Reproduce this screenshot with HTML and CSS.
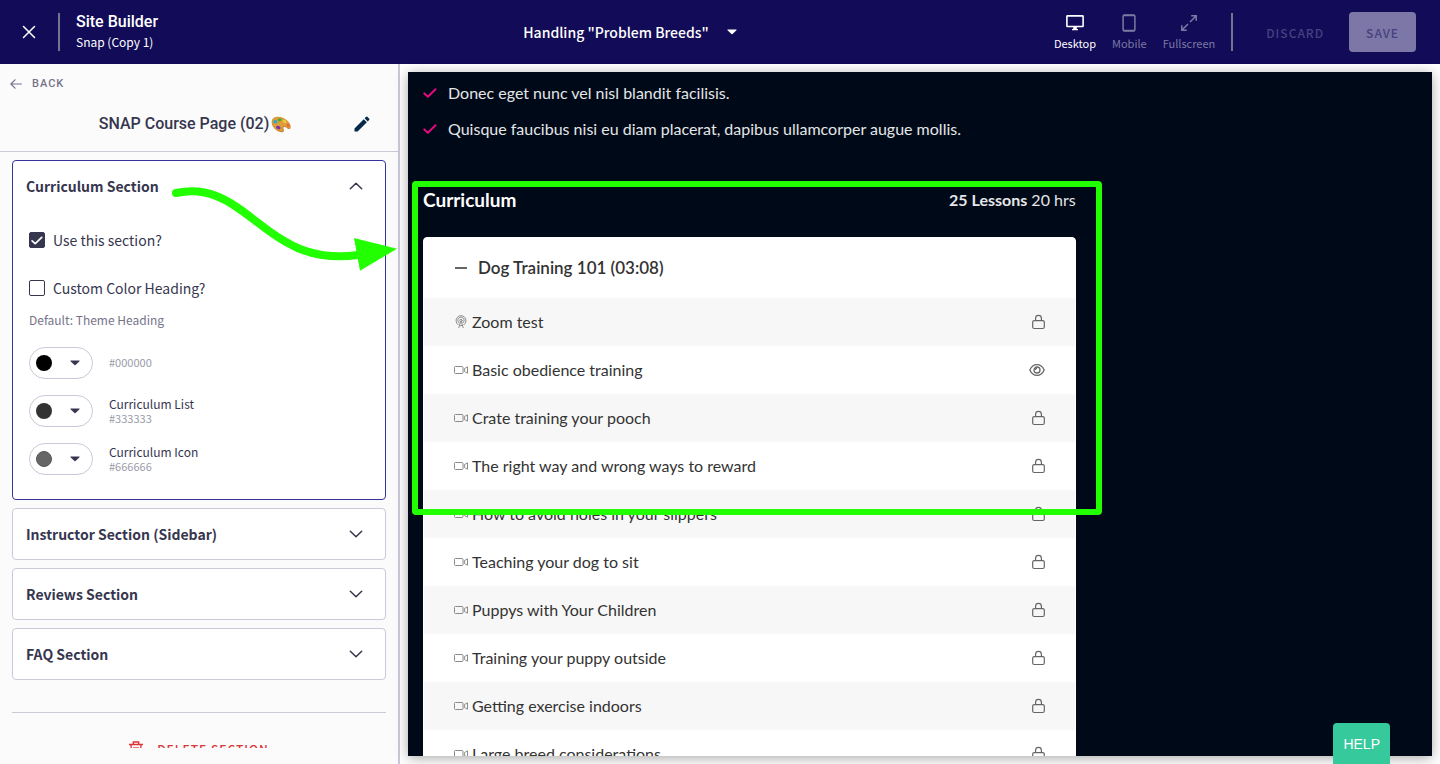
FILE: index.html
```html
<!DOCTYPE html>
<html lang="en">
<head>
<meta charset="utf-8">
<title>Site Builder</title>
<meta name="viewport" content="width=device-width, initial-scale=1">
<link rel="stylesheet" href="styles.css">
</head>
<body>
<svg class="sprite" aria-hidden="true">
  <symbol id="caret" viewBox="0 0 10 6"><path d="M.8.500h8.400a.4.4 0 0 1 .3.700L5.500 5a.7.7 0 0 1-1 0L.5 1.200A.4.4 0 0 1 .8.500z" fill="currentColor"/></symbol>
  <symbol id="chevron" viewBox="0 0 14 8"><path d="M1.300 1.200 7 6.800l5.700-5.600" fill="none" stroke="currentColor" stroke-width="1.500" stroke-linecap="round" stroke-linejoin="round"/></symbol>
  <symbol id="tick" viewBox="0 0 14 10"><path d="M1.300 5.400 4.900 8.700 12.500 1.300" fill="none" stroke="currentColor" stroke-width="2" stroke-linecap="round" stroke-linejoin="round"/></symbol>
  <symbol id="video" viewBox="0 0 14 10"><g fill="none" stroke="currentColor" stroke-width="1"><rect x=".5" y="1.500" width="8.500" height="7" rx="1"/><path d="M10.400 3.600 13.500 1.800v6.400l-3.100-1.800z" stroke-linejoin="round"/></g></symbol>
  <symbol id="podcast" viewBox="0 0 12 14"><g fill="none" stroke="currentColor" stroke-width="1" stroke-linecap="round"><path d="M3 9.700a5 5 0 1 1 6 0"/><path d="M4 7.900a3.200 3.200 0 1 1 4 0"/><circle cx="6" cy="5.500" r="1.200"/><path d="M5.500 7 3.800 12.700M6.500 7l1.700 5.700M4.500 10.600h3"/></g></symbol>
  <symbol id="lock" viewBox="0 0 14 16"><g fill="none" stroke="currentColor" stroke-width="1.200"><rect x="1.700" y="6.600" width="11.600" height="7.900" rx="1.500"/><path d="M4.600 6.500V4.300a2.900 2.900 0 0 1 5.800 0v2.200"/></g></symbol>
  <symbol id="eye" viewBox="0 0 16 14"><g fill="none" stroke="currentColor" stroke-width="1.300"><path d="M.8 7C2.400 3.500 5 1.600 8 1.600S13.600 3.500 15.200 7C13.600 10.500 11 12.400 8 12.400S2.400 10.500.8 7z"/><circle cx="8" cy="7" r="3"/><path d="M6.300 7A1.600 1.600 0 0 1 8 5.400"/></g></symbol>
</svg>

<header class="topbar">
  <div class="brand">
    <button class="icon-button close" type="button" aria-label="Close">
      <svg width="14" height="14" viewBox="0 0 14 14"><path d="M1.500 1.500l11 11M12.500 1.500l-11 11" stroke="currentColor" stroke-width="1.500" stroke-linecap="round"/></svg>
    </button>
    <span class="rule"></span>
    <div>
      <h1 class="brand-title">Site Builder</h1>
      <p class="brand-subtitle">Snap (Copy 1)</p>
    </div>
  </div>
  <div class="page-picker">
    <button class="page-button" type="button">Handling "Problem Breeds" <svg width="10" height="6"><use href="#caret"/></svg></button>
  </div>
  <div class="tools">
    <button class="tool active" type="button">
      <svg width="18" height="18" viewBox="0 0 18 18"><rect x=".9" y="1.900" width="16.200" height="10.600" rx=".6" fill="none" stroke="currentColor" stroke-width="1.600"/><path d="M7.200 13h3.600v2H12v1.200H6V15h1.200z" fill="currentColor"/></svg>
      Desktop
    </button>
    <button class="tool" type="button">
      <svg width="18" height="18" viewBox="0 0 18 18"><rect x="3.100" y="1" width="11.800" height="16" rx="1.500" fill="none" stroke="currentColor" stroke-width="1.500"/><path d="M3.500 1.500h11M3.500 16.500h11" stroke="currentColor" stroke-width="1.500"/></svg>
      Mobile
    </button>
    <button class="tool" type="button">
      <svg width="18" height="18" viewBox="0 0 18 18"><path d="M11.200 1.800H16.200V6.800M16 2 10 8M6.800 16.200H1.800V11.200M2 16l6-6" fill="none" stroke="currentColor" stroke-width="1.500"/></svg>
      Fullscreen
    </button>
    <span class="rule"></span>
    <button class="action discard" type="button">DISCARD</button>
    <button class="action save" type="button">SAVE</button>
  </div>
</header>

<div class="workspace">
  <aside class="sidebar">
    <div class="sidebar-head">
      <a class="back" href="#"><svg width="12" height="10" viewBox="0 0 12 10"><path d="M5 .8.900 5 5 9.200M1 5h10.400" fill="none" stroke="currentColor" stroke-width="1.200" stroke-linecap="round" stroke-linejoin="round"/></svg>BACK</a>
      <div class="page-title">
        <h2>SNAP Course Page (02)</h2>
        <svg class="palette" width="20" height="17" viewBox="0 0 20 17" role="img" aria-label="Palette">
          <path d="M1 4.300C2 1 6.200-.2 11 1.500c5 1.800 9.300 6.600 8.600 10.300-.3 1.500-1.500 1.800-2.700 1-1.400-.9-2.700-2.300-4.100-1.500-1.200.7.500 2.100.1 3.700-.4 1.500-3 1.600-5.300.5C2.900 13.200-.4 8.500 1 4.300z" fill="#c98a2e"/>
          <path d="M1.500 4C2.600 1.200 6.300.2 10.800 1.800c4.700 1.700 8.700 5.900 8.300 9.200-.3 1.200-1.400 1.100-2.500.3-1.500-1-3.200-2-4.600-1-1.400 1 .1 2.500-.3 3.900-.4 1.100-2.200 1.100-4.200.1C3.100 12.100.4 7.800 1.500 4z" fill="#dc9d3a"/>
          <ellipse cx="4.300" cy="5.700" rx="2" ry="1.700" fill="#2ba7cf"/>
          <ellipse cx="8.600" cy="3.700" rx="2" ry="1.500" fill="#43ae35"/>
          <ellipse cx="13.600" cy="5.300" rx="2" ry="1.300" transform="rotate(30 13.600 5.300)" fill="#f5cf31"/>
          <ellipse cx="17.200" cy="9.300" rx="1.700" ry="1.200" transform="rotate(45 17.200 9.300)" fill="#ef5c43"/>
          <ellipse cx="7.300" cy="11.600" rx="2.300" ry="1.600" transform="rotate(20 7.300 11.600)" fill="#7630b9"/>
        </svg>
        <button class="icon-button edit" type="button" aria-label="Rename page">
          <svg width="20" height="20" viewBox="0 0 24 24"><path d="M3 17.250V21h3.750L17.810 9.940l-3.750-3.750L3 17.250zM20.710 7.040a1 1 0 0 0 0-1.410l-2.340-2.340a1 1 0 0 0-1.410 0l-1.830 1.830 3.750 3.750z" fill="currentColor"/></svg>
        </button>
      </div>
    </div>

    <div class="sections">
      <section class="card open">
        <button class="card-head" type="button" aria-expanded="true">Curriculum Section <svg class="up" width="14" height="8"><use href="#chevron"/></svg></button>
        <div class="card-body">
          <label class="check"><span class="box"><input type="checkbox" checked><svg width="12" height="9"><use href="#tick"/></svg></span>Use this section?</label>
          <label class="check"><span class="box"><input type="checkbox"><svg width="12" height="9"><use href="#tick"/></svg></span>Custom Color Heading?</label>
          <p class="hint">Default: Theme Heading</p>
          <ul class="colors">
            <li><button class="picker" type="button" aria-label="Heading color"><span class="swatch black"></span><svg width="10" height="6"><use href="#caret"/></svg></button><div><p class="hex">#000000</p></div></li>
            <li><button class="picker" type="button" aria-label="Curriculum List color"><span class="swatch charcoal"></span><svg width="10" height="6"><use href="#caret"/></svg></button><div><p class="color-name">Curriculum List</p><p class="hex">#333333</p></div></li>
            <li><button class="picker" type="button" aria-label="Curriculum Icon color"><span class="swatch gray"></span><svg width="10" height="6"><use href="#caret"/></svg></button><div><p class="color-name">Curriculum Icon</p><p class="hex">#666666</p></div></li>
          </ul>
        </div>
      </section>
      <section class="card"><button class="card-head" type="button" aria-expanded="false">Instructor Section (Sidebar) <svg width="14" height="8"><use href="#chevron"/></svg></button></section>
      <section class="card"><button class="card-head" type="button" aria-expanded="false">Reviews Section <svg width="14" height="8"><use href="#chevron"/></svg></button></section>
      <section class="card"><button class="card-head" type="button" aria-expanded="false">FAQ Section <svg width="14" height="8"><use href="#chevron"/></svg></button></section>
      <div class="danger">
        <button class="delete" type="button"><svg width="14" height="16" viewBox="0 0 14 16"><g fill="none" stroke="currentColor" stroke-width="1.300"><path d="M0 3.500h14M4.300 3.200V1h5.400v2.200M2 3.700l.6 11.500h8.800L12 3.700M5 6v7M7 6v7M9 6v7"/></g></svg>DELETE SECTION</button>
      </div>
    </div>
  </aside>

  <main class="preview">
    <div class="canvas">
      <div class="content">
        <ul class="benefits">
          <li><svg width="14" height="10"><use href="#tick"/></svg>Donec eget nunc vel nisl blandit facilisis.</li>
          <li><svg width="14" height="10"><use href="#tick"/></svg>Quisque faucibus nisi eu diam placerat, dapibus ullamcorper augue mollis.</li>
        </ul>
        <div class="curriculum-head">
          <h2>Curriculum</h2>
          <p><strong>25 Lessons</strong> 20 hrs</p>
        </div>
        <div class="course">
          <h3><svg width="14" height="14" viewBox="0 0 14 14"><path d="M1 7h12" stroke="currentColor" stroke-width="1.500"/></svg>Dog Training 101 (03:08)</h3>
          <ul class="lessons">
            <li><svg class="kind" width="14" height="14"><use href="#podcast"/></svg><span>Zoom test</span><svg width="14" height="16"><use href="#lock"/></svg></li>
            <li><svg class="kind" width="14" height="10"><use href="#video"/></svg><span>Basic obedience training</span><svg width="16" height="14"><use href="#eye"/></svg></li>
            <li><svg class="kind" width="14" height="10"><use href="#video"/></svg><span>Crate training your pooch</span><svg width="14" height="16"><use href="#lock"/></svg></li>
            <li><svg class="kind" width="14" height="10"><use href="#video"/></svg><span>The right way and wrong ways to reward</span><svg width="14" height="16"><use href="#lock"/></svg></li>
            <li><svg class="kind" width="14" height="10"><use href="#video"/></svg><span>How to avoid holes in your slippers</span><svg width="14" height="16"><use href="#lock"/></svg></li>
            <li><svg class="kind" width="14" height="10"><use href="#video"/></svg><span>Teaching your dog to sit</span><svg width="14" height="16"><use href="#lock"/></svg></li>
            <li><svg class="kind" width="14" height="10"><use href="#video"/></svg><span>Puppys with Your Children</span><svg width="14" height="16"><use href="#lock"/></svg></li>
            <li><svg class="kind" width="14" height="10"><use href="#video"/></svg><span>Training your puppy outside</span><svg width="14" height="16"><use href="#lock"/></svg></li>
            <li><svg class="kind" width="14" height="10"><use href="#video"/></svg><span>Getting exercise indoors</span><svg width="14" height="16"><use href="#lock"/></svg></li>
            <li><svg class="kind" width="14" height="10"><use href="#video"/></svg><span>Large breed considerations</span><svg width="14" height="16"><use href="#lock"/></svg></li>
          </ul>
        </div>
        <div class="highlight"></div>
      </div>
    </div>
  </main>
</div>

<svg class="arrow" width="400" height="280" viewBox="0 0 400 280" aria-hidden="true">
  <path d="M176 193C196 189 213 192 232 204 250 215 266 231 286 242 306 254 330 259 358 255" fill="none" stroke="#2f0" stroke-width="8" stroke-linecap="round"/>
  <path d="M354 238 397 248.700 360 270.700z" fill="#2f0"/>
</svg>
<button class="help" type="button">HELP</button>
</body>
</html>
```
FILE: styles.css
```css
* { box-sizing: border-box; }

:root {
  --ui: "Noto Sans CJK SC", "Noto Sans", sans-serif;
  --label: Roboto, sans-serif;
  --site: Lato, sans-serif;
  --ink: #36364f;
  --line: #c9c9d9;
  --mark: #2f0;
}

body {
  margin: 0;
  height: 100vh;
  display: flex;
  flex-direction: column;
  overflow: hidden;
  font-family: var(--ui);
  color: var(--ink);
}

h1, h2, h3, p, ul { margin: 0; padding: 0; }
ul { list-style: none; }
svg { flex: none; display: block; }
button { font: inherit; color: inherit; background: none; border: 0; padding: 0; cursor: pointer; }
.sprite { position: absolute; width: 0; height: 0; }

/* Top bar */
.topbar {
  flex: none;
  height: 64px;
  display: flex;
  align-items: center;
  padding: 0 24px 0 22px;
  background: #120b58;
  color: #fff;
}
.brand { display: flex; align-items: center; }
.icon-button { display: grid; place-items: center; }
.rule { width: 2px; height: 38px; background: #767390; }
.brand .rule { margin: 0 16px 0 22px; }
.brand-title { font: 500 16px/22px var(--label); }
.brand-subtitle { font-size: 12px; line-height: 18px; padding-bottom: 2px; }
.page-picker { flex: 1; display: flex; justify-content: center; padding-left: 48px; }
.page-button { display: flex; align-items: center; gap: 18px; font-size: 14px; line-height: 24px; font-weight: 500; }
.tools { display: flex; align-items: center; }
.tool {
  display: flex;
  flex-direction: column;
  align-items: center;
  gap: 2px;
  margin-right: 16px;
  padding-top: 2px;
  font-size: 11px;
  line-height: 18px;
  color: #7d79a2;
}
.tool.active { color: #fff; }
.action { height: 40px; font-size: 12px; font-weight: 500; letter-spacing: 1px; color: #47417f; }
.discard { margin: 0 25px 0 33px; }
.save { padding: 0 17px; border-radius: 4px; background: #7c77a6; }

/* Workspace */
.workspace { flex: 1; min-height: 0; display: flex; }
.sidebar {
  flex: none;
  width: 400px;
  display: flex;
  flex-direction: column;
  padding-bottom: 16px;
  background: #fbfbfb;
  border-right: 2px solid var(--line);
}
.sidebar-head { flex: none; height: 88px; border-bottom: 1px solid var(--line); padding-top: 10px; }
.back {
  display: flex;
  align-items: center;
  gap: 10px;
  width: fit-content;
  margin-left: 10px;
  font: 500 11px/20px var(--label);
  letter-spacing: 1px;
  color: #767389;
  text-decoration: none;
}
.page-title {
  display: grid;
  grid-template-columns: 1fr auto auto 1fr;
  align-items: center;
  gap: 2px;
  margin-top: 18px;
  padding: 0 26px 0 18px;
}
.page-title h2 { grid-column: 2; font: 500 16px/24px var(--label); }
.edit { justify-self: end; color: #06294a; }

.sections {
  flex: 1;
  min-height: 0;
  overflow: hidden;
  display: flex;
  flex-direction: column;
  gap: 8px;
  padding: 8px 12px 0;
}
.card { flex: none; background: #fff; border: 1px solid var(--line); border-radius: 4px; }
.card.open { border-color: #34349a; }
.card-head {
  width: 100%;
  height: 50px;
  display: flex;
  align-items: center;
  justify-content: space-between;
  padding: 0 22px 0 13px;
  font-size: 14px;
  font-weight: 700;
}
.up { transform: rotate(180deg); }
.card-body { padding: 5px 16px 24px; }
.check { display: flex; align-items: center; gap: 8px; height: 48px; font-size: 14px; }
.box { display: grid; place-items: center; }
.box > * { grid-area: 1 / 1; }
.box input {
  appearance: none;
  width: 16px;
  height: 16px;
  margin: 0;
  border: 1px solid var(--ink);
  border-radius: 2px;
  background: #fff;
}
.box input:checked { background: var(--ink); }
.box svg { z-index: 1; color: #fff; pointer-events: none; }
.hint { font-size: 12px; line-height: 16px; color: #767389; }
.colors { display: flex; flex-direction: column; gap: 16px; margin-top: 19px; }
.colors li { display: flex; align-items: center; gap: 16px; height: 32px; }
.picker {
  width: 64px;
  height: 32px;
  display: flex;
  align-items: center;
  justify-content: space-between;
  padding: 0 12px 0 6px;
  border: 1px solid var(--line);
  border-radius: 16px;
}
.swatch { width: 16px; height: 16px; border-radius: 50%; }
.black { background: #000; }
.charcoal { background: #333; }
.gray { background: #666; border: 1px solid #555; }
.color-name { font-size: 12px; line-height: 16px; }
.hex { font-size: 11px; line-height: 12px; padding-bottom: 2px; color: #9b9baa; }
.danger {
  flex: none;
  display: flex;
  justify-content: center;
  margin-top: 24px;
  padding-top: 24px;
  border-top: 1px solid var(--line);
}
.delete { display: flex; align-items: center; gap: 14px; font-size: 12px; line-height: 24px; font-weight: 500; letter-spacing: 1px; color: #d93636; }

/* Preview */
.preview { flex: 1; min-width: 0; display: flex; padding: 8px; background: #fff; }
.canvas {
  flex: 1;
  min-width: 0;
  overflow: hidden;
  display: grid;
  grid-template-columns: minmax(0, 2fr) minmax(0, 1fr);
  background: #000917;
  color: #e4e6e8;
  box-shadow: 0 2px 12px rgba(0, 0, 0, .35);
  font-family: var(--site);
  font-size: 16px;
  line-height: 24px;
}
.content { position: relative; padding: 9px 15px 0; }
.benefits { display: flex; flex-direction: column; gap: 12px; }
.benefits li { display: flex; align-items: center; gap: 11px; }
.benefits svg { color: #e5097f; }
.curriculum-head { display: flex; align-items: center; justify-content: space-between; margin: 46px 0 24px; }
.curriculum-head h2 { font-size: 19px; line-height: 26px; font-weight: 700; color: #fff; }
.curriculum-head strong { font-weight: 700; }
.course { border: 1px solid #fff; border-radius: 4px; background: #fff; color: #333; }
.course h3 { display: flex; align-items: center; gap: 10px; height: 60px; padding-left: 30px; font-size: 17px; font-weight: 600; }
.lessons li { display: flex; align-items: center; gap: 4px; height: 48px; padding: 0 30px; }
.lessons li:nth-child(odd) { background: #f7f7f7; }
.lessons span { flex: 1; padding-bottom: 1px; }
.lessons svg { color: #666; }
.lessons .kind { color: #8c8c8c; }

/* Callouts laid over the page */
.highlight {
  position: absolute;
  top: 109px;
  left: 4px;
  right: -11px;
  height: 334px;
  border: 6px solid var(--mark);
  border-radius: 4px;
}
.arrow { position: absolute; top: 0; left: 0; pointer-events: none; }
.help {
  position: absolute;
  right: 50px;
  bottom: 0;
  height: 41px;
  padding: 0 10px;
  border-radius: 4px 4px 0 0;
  background: #36c99c;
  color: #fff;
  font: 14px/20px "Liberation Sans", Arial, sans-serif;
}
```
